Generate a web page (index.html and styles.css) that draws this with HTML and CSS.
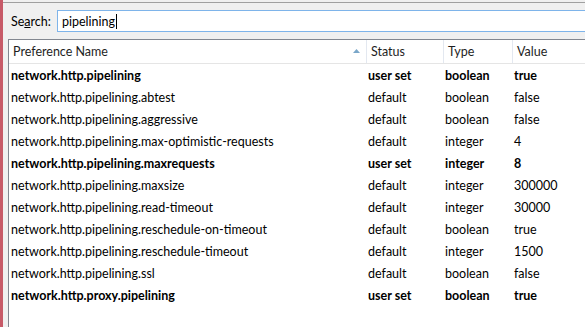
FILE: index.html
```html
<!DOCTYPE html>
<html lang="en">
<head>
    <meta charset="UTF-8">
    <title>about:config</title>
    <link rel="stylesheet" href="styles.css">
</head>
<body>
    <div class="page">
        <div class="window">
            <div class="search-row">
                <label for="filter">Se<u>a</u>rch:</label>
                <div class="search-box">
                    <span id="filter">pipelining</span><span class="caret"></span>
                </div>
            </div>

            <div class="prefs">
                <div class="row head">
                    <div class="cell name-col">
                        Preference Name
                        <svg class="sort" width="7" height="4" viewBox="0 0 7 4"><path d="M0 4 L3.5 0 L7 4 Z" fill="#7aa7c9"/></svg>
                    </div>
                    <div class="cell">Status</div>
                    <div class="cell">Type</div>
                    <div class="cell">Value</div>
                </div>
                <div id="rows"></div>
            </div>
        </div>
    </div>

    <script>
        const prefs = [
            ["network.http.pipelining", "user set", "boolean", "true"],
            ["network.http.pipelining.abtest", "default", "boolean", "false"],
            ["network.http.pipelining.aggressive", "default", "boolean", "false"],
            ["network.http.pipelining.max-optimistic-requests", "default", "integer", "4"],
            ["network.http.pipelining.maxrequests", "user set", "integer", "8"],
            ["network.http.pipelining.maxsize", "default", "integer", "300000"],
            ["network.http.pipelining.read-timeout", "default", "integer", "30000"],
            ["network.http.pipelining.reschedule-on-timeout", "default", "boolean", "true"],
            ["network.http.pipelining.reschedule-timeout", "default", "integer", "1500"],
            ["network.http.pipelining.ssl", "default", "boolean", "false"],
            ["network.http.proxy.pipelining", "user set", "boolean", "true"]
        ];

        const rows = document.getElementById("rows");
        prefs.forEach(function (p) {
            const row = document.createElement("div");
            row.className = "row" + (p[1] === "user set" ? " modified" : "");
            p.forEach(function (text) {
                const cell = document.createElement("div");
                cell.className = "cell";
                cell.textContent = text;
                row.appendChild(cell);
            });
            rows.appendChild(row);
        });
    </script>
</body>
</html>
```

FILE: styles.css
```css
body {
    margin: 0;
    background-color: #f0f0f0;
    font-family: Lato, "Open Sans", sans-serif;
    font-size: 12.5px;
    color: #000;
    overflow: hidden;
}
.page {
    height: 327px;
    padding-top: 2px;
    border-left: 3px solid #c75a68;
    box-sizing: border-box;
}
.window {
    border-top: 1px solid #a0a0a0;
}
.search-row {
    display: flex;
    align-items: center;
    padding: 7px 0 0 8px;
    height: 22px;
}
.search-row label {
    width: 46px;
}
.search-row u {
    text-decoration-thickness: 1px;
}
.search-box {
    flex: 1;
    height: 20px;
    border: 1px solid #7eb4ea;
    border-right: none;
    background-color: #fff;
    padding-left: 4px;
    display: flex;
    align-items: center;
}
.caret {
    display: inline-block;
    width: 1px;
    height: 15px;
    background-color: #000;
    margin-left: 1px;
}
.prefs {
    margin: 7px 0 0 5px;
    border-top: 1px solid #828790;
    border-left: 1px solid #828790;
    background-color: #fff;
    height: 300px;
}
.row {
    display: grid;
    grid-template-columns: 357px 77px 69px 1fr;
    height: 22px;
    align-items: center;
    white-space: nowrap;
}
.row .cell {
    padding-left: 2px;
}
.head {
    height: 23px;
    border-bottom: 1px solid #e5e5e5;
    color: #1e1e1e;
}
.head .cell {
    padding-left: 4px;
    height: 23px;
    line-height: 23px;
    border-left: 1px solid #e3e8f0;
}
.head .name-col {
    border-left: none;
    position: relative;
}
.sort {
    position: absolute;
    right: 6px;
    top: 9px;
}
.modified {
    font-weight: bold;
}
```
